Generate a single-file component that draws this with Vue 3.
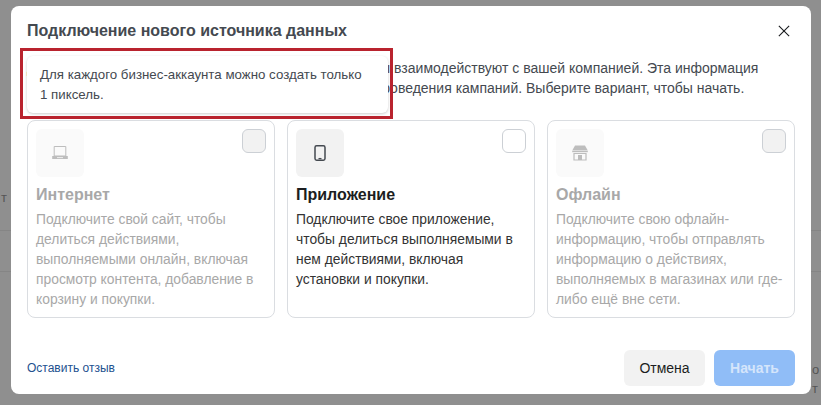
<template>
  <div class="screen">
    <div class="page-bg">
      <div class="bg-line bg-line-1"></div>
      <div class="bg-line bg-line-2"></div>
      <span class="bg-text bg-left">т</span>
      <span class="bg-text bg-right-1">о</span>
      <span class="bg-text bg-right-2">т</span>
    </div>

    <section class="modal">
      <header class="modal-head">
        <h1>Подключение нового источника данных</h1>
        <button class="close" aria-label="Закрыть">
          <svg width="14" height="14" viewBox="0 0 14 14">
            <path d="M1 1l12 12M13 1L1 13" stroke="#1c1e21" stroke-width="1.3" fill="none" />
          </svg>
        </button>
      </header>

      <p class="intro">
        Добавьте источник данных, чтобы увидеть, как клиенты взаимодействуют с вашей компанией. Эта информация<br />
        может использоваться для настройки аудиторий или проведения кампаний. Выберите вариант, чтобы начать.
      </p>

      <div class="cards">
        <article v-for="card in cards" :key="card.title" class="card" :class="{ off: card.off }">
          <div class="card-top">
            <span class="icon-box">
              <svg width="16" height="16" viewBox="0 0 16 16" v-html="card.icon"></svg>
            </span>
            <span class="check"></span>
          </div>
          <h2>{{ card.title }}</h2>
          <p>{{ card.text }}</p>
        </article>
      </div>

      <footer class="modal-foot">
        <a class="feedback">Оставить отзыв</a>
        <div class="actions">
          <button class="btn cancel">Отмена</button>
          <button class="btn start">Начать</button>
        </div>
      </footer>

      <div class="tip">Для каждого бизнес-аккаунта можно создать только 1 пиксель.</div>
      <div class="highlight"></div>
    </section>
  </div>
</template>

<script setup>
const laptop = '<path d="M2.2 1.5h11.6V11H2.2z" fill="none" stroke="#bdbdbd" stroke-width="1"/><path d="M0.2 11h15.6v3H0.2z" fill="#bdbdbd"/><path d="M5 12.6h6" stroke="#eee" stroke-width="1"/>'
const phone = '<rect x="3" y="0.8" width="10" height="14.4" rx="1.6" fill="none" stroke="#444950" stroke-width="1.5"/><path d="M6.5 13.6h3" stroke="#444950" stroke-width="1.3"/>'
const shop = '<path d="M3 0.5h10L15.8 5.5H0.2z" fill="#bdbdbd"/><path d="M0.2 6h15.6v1.2H0.2z" fill="#bdbdbd"/><path d="M2 8.5h12v6.5H2z" fill="none" stroke="#bdbdbd" stroke-width="1.2"/><path d="M6 10h4v5H6z" fill="#bdbdbd"/>'

const cards = [
  {
    title: 'Интернет',
    off: true,
    icon: laptop,
    text: 'Подключите свой сайт, чтобы делиться действиями, выполняемыми онлайн, включая просмотр контента, добавление в корзину и покупки.'
  },
  {
    title: 'Приложение',
    off: false,
    icon: phone,
    text: 'Подключите свое приложение, чтобы делиться выполняемыми в нем действиями, включая установки и покупки.'
  },
  {
    title: 'Офлайн',
    off: true,
    icon: shop,
    text: 'Подключите свою офлайн-информацию, чтобы отправлять информацию о действиях, выполняемых в магазинах или где-либо ещё вне сети.'
  }
]
</script>

<style>
html, body {
  margin: 0;
  background: #8f8f8f;
}
</style>

<style scoped>
.screen {
  position: relative;
  width: 821px;
  height: 405px;
  overflow: hidden;
  padding: 6px 10px 0 11px;
  box-sizing: border-box;
  background: #8f8f8f;
  font-family: "Liberation Sans", Arial, sans-serif;
}

.page-bg {
  position: absolute;
  inset: 0;
}

.bg-line {
  position: absolute;
  left: 0;
  right: 0;
  height: 1px;
  background: #858585;
}

.bg-line-1 { top: 230px; }
.bg-line-2 { top: 271px; }

.bg-text {
  position: absolute;
  font-size: 13px;
  line-height: 16px;
  color: #555;
}

.bg-left { left: 1px; top: 190px; }
.bg-right-1 { left: 812px; top: 362px; }
.bg-right-2 { left: 812px; top: 381px; }

.modal {
  position: relative;
  width: 800px;
  height: 388px;
  padding: 0 16px;
  box-sizing: border-box;
  background: #fff;
  border-radius: 8px;
  display: flex;
  flex-direction: column;
}

.modal-head {
  height: 50px;
  display: flex;
  align-items: center;
  justify-content: space-between;
}

h1 {
  margin: 0;
  font-size: 16px;
  font-weight: 700;
  color: #444950;
}

.close {
  width: 12px;
  height: 12px;
  padding: 0;
  margin-right: 5px;
  border: 0;
  background: none;
  display: flex;
}

.close svg {
  width: 12px;
  height: 12px;
}

.intro {
  margin: 0;
  height: 64px;
  padding-top: 2px;
  box-sizing: border-box;
  font-size: 14px;
  line-height: 20px;
  color: #444950;
  white-space: nowrap;
}

.cards {
  display: grid;
  grid-template-columns: repeat(3, 248px);
  gap: 12px;
}

.card {
  height: 198px;
  padding: 8px;
  box-sizing: border-box;
  border: 1px solid #dadde1;
  border-radius: 8px;
  color: #333;
}

.card-top {
  display: flex;
  justify-content: space-between;
}

.icon-box {
  width: 48px;
  height: 48px;
  border-radius: 6px;
  background: #f2f2f2;
  display: flex;
  align-items: center;
  justify-content: center;
}

.check {
  width: 22px;
  height: 22px;
  border: 1px solid #ccd0d5;
  border-radius: 6px;
  background: #fff;
}

h2 {
  margin: 8px 0 4px;
  font-size: 16px;
  line-height: 20px;
  font-weight: 700;
  color: #1c1e21;
}

.card p {
  margin: 0;
  font-size: 13.85px;
  line-height: 20px;
}

.card.off .icon-box { background: #fafafa; }
.card.off .check { background: #f2f2f2; }
.card.off h2 { color: #a8a8a8; }
.card.off p { color: #a8a8a8; }

.modal-foot {
  margin-top: auto;
  height: 36px;
  margin-bottom: 8px;
  display: flex;
  align-items: center;
  justify-content: space-between;
}

.feedback {
  font-size: 12px;
  color: #23518f;
}

.actions {
  display: flex;
  gap: 9px;
}

.btn {
  width: 81px;
  height: 36px;
  border: 0;
  border-radius: 6px;
  font-family: inherit;
  font-size: 14px;
}

.cancel {
  background: #f2f2f2;
  color: #1c1e21;
}

.start {
  background: #90bdf7;
  color: #d5e5fb;
  font-weight: 700;
}

.tip {
  position: absolute;
  left: 16px;
  top: 50px;
  width: 361px;
  height: 57px;
  padding: 9px 20px 9px 13px;
  box-sizing: border-box;
  background: #fff;
  border-radius: 6px;
  box-shadow: 0 1px 3px rgba(0, 0, 0, 0.2);
  font-size: 13.3px;
  line-height: 20px;
  color: #444950;
}

.highlight {
  position: absolute;
  left: 9px;
  top: 42px;
  width: 373px;
  height: 71px;
  box-sizing: border-box;
  border: 3px solid #b9232e;
}
</style>
